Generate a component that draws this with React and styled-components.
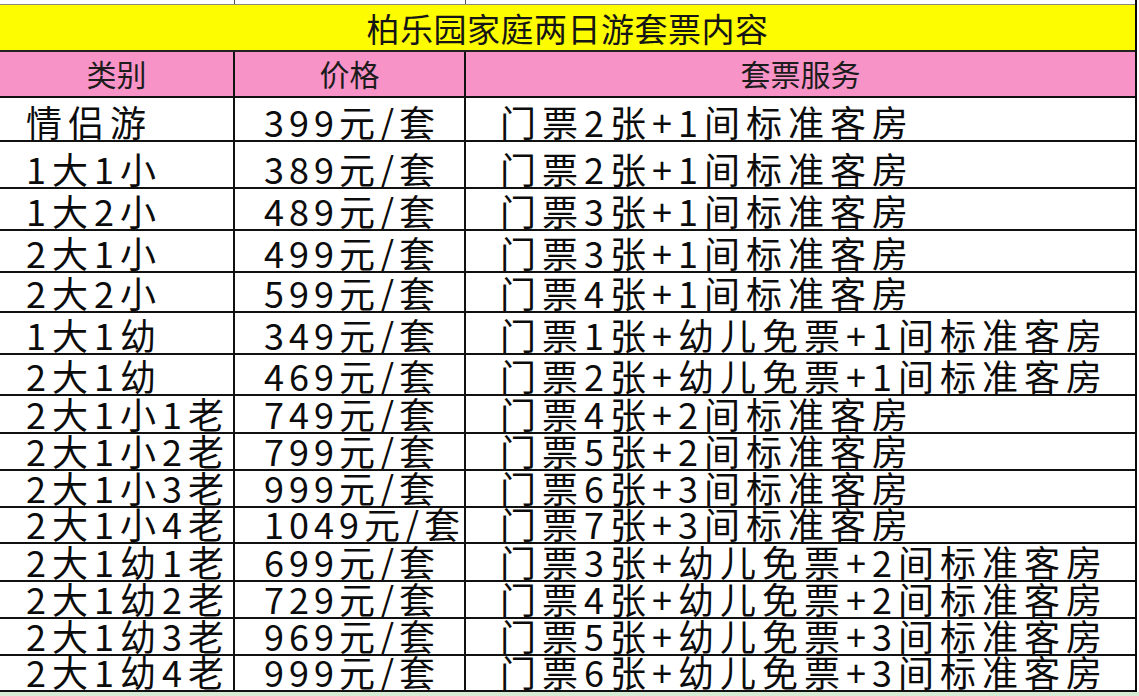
import React from 'react';
import styled, { createGlobalStyle } from 'styled-components';

const GlobalStyle = createGlobalStyle`
  html, body {
    margin: 0;
    padding: 0;
    background: #fff;
  }
  body {
    font-family: "Noto Sans CJK SC", "Noto Sans", sans-serif;
    color: #111;
  }
`;

const rows = [
  { kind: '情侣游', price: '399元/套', service: '门票2张+1间标准客房', h: 44 },
  { kind: '1大1小', price: '389元/套', service: '门票2张+1间标准客房', h: 47 },
  { kind: '1大2小', price: '489元/套', service: '门票3张+1间标准客房', h: 42 },
  { kind: '2大1小', price: '499元/套', service: '门票3张+1间标准客房', h: 42 },
  { kind: '2大2小', price: '599元/套', service: '门票4张+1间标准客房', h: 40 },
  { kind: '1大1幼', price: '349元/套', service: '门票1张+幼儿免票+1间标准客房', h: 42 },
  { kind: '2大1幼', price: '469元/套', service: '门票2张+幼儿免票+1间标准客房', h: 41 },
  { kind: '2大1小1老', price: '749元/套', service: '门票4张+2间标准客房', h: 38 },
  { kind: '2大1小2老', price: '799元/套', service: '门票5张+2间标准客房', h: 37 },
  { kind: '2大1小3老', price: '999元/套', service: '门票6张+3间标准客房', h: 37 },
  { kind: '2大1小4老', price: '1049元/套', service: '门票7张+3间标准客房', h: 36 },
  { kind: '2大1幼1老', price: '699元/套', service: '门票3张+幼儿免票+2间标准客房', h: 38 },
  { kind: '2大1幼2老', price: '729元/套', service: '门票4张+幼儿免票+2间标准客房', h: 37 },
  { kind: '2大1幼3老', price: '969元/套', service: '门票5张+幼儿免票+3间标准客房', h: 37 },
  { kind: '2大1幼4老', price: '999元/套', service: '门票6张+幼儿免票+3间标准客房', h: 36 },
];

const Sheet = styled.div`
  width: 1137px;
  border-right: 2px solid #0a0a0a;
  box-sizing: border-box;
`;

const Row = styled.div`
  display: grid;
  grid-template-columns: 235px 231px 1fr;
  height: ${({ $h }) => $h}px;
  box-sizing: border-box;
  border-bottom: 2px solid #111;
  background: ${({ $bg }) => $bg || '#fff'};
`;

const TopStrip = styled(Row)`
  border-bottom: 1px solid #8a8a7a;
`;

const Title = styled.div`
  height: 47px;
  box-sizing: border-box;
  border-bottom: 2px solid #222;
  background: #fefc00;
  display: flex;
  align-items: center;
  justify-content: center;
  font-size: 33px;
  font-weight: 400;
  color: #151515;
  letter-spacing: 0.5px;
`;

const Cell = styled.div`
  box-sizing: border-box;
  border-right: ${({ $last }) => ($last ? 'none' : '2px solid #111')};
  overflow: hidden;
  white-space: nowrap;
  display: flex;
`;

const HeadCell = styled(Cell)`
  align-items: center;
  justify-content: center;
  font-size: 30px;
  color: #1c1c1c;
  padding-bottom: 2px;
`;

const DataCell = styled(Cell)`
  align-items: flex-end;
  padding-left: ${({ $pad }) => $pad}px;
  padding-bottom: 1px;
  font-size: 36px;
  line-height: 36px;
  letter-spacing: ${({ $ls }) => $ls || 6}px;
  color: #0c0c0c;
`;

const StripCell = styled(Cell)`
  border-right: ${({ $last }) => ($last ? 'none' : '1px solid #555')};
`;

const Footer = styled.div`
  height: 4px;
  background: #d6ebd4;
`;

export default function App() {
  return (
    <>
      <GlobalStyle />
      <Sheet>
        <TopStrip $h={5}>
          <StripCell />
          <StripCell />
          <StripCell $last />
        </TopStrip>
        <Title>柏乐园家庭两日游套票内容</Title>
        <Row $h={46} $bg="#f893c8">
          <HeadCell>类别</HeadCell>
          <HeadCell>价格</HeadCell>
          <HeadCell $last>套票服务</HeadCell>
        </Row>
        {rows.map((r, i) => (
          <Row key={i} $h={r.h}>
            <DataCell $pad={26}>{r.kind}</DataCell>
            <DataCell $pad={29} $ls={5}>{r.price}</DataCell>
            <DataCell $pad={34} $last>{r.service}</DataCell>
          </Row>
        ))}
      </Sheet>
      <Footer />
    </>
  );
}
